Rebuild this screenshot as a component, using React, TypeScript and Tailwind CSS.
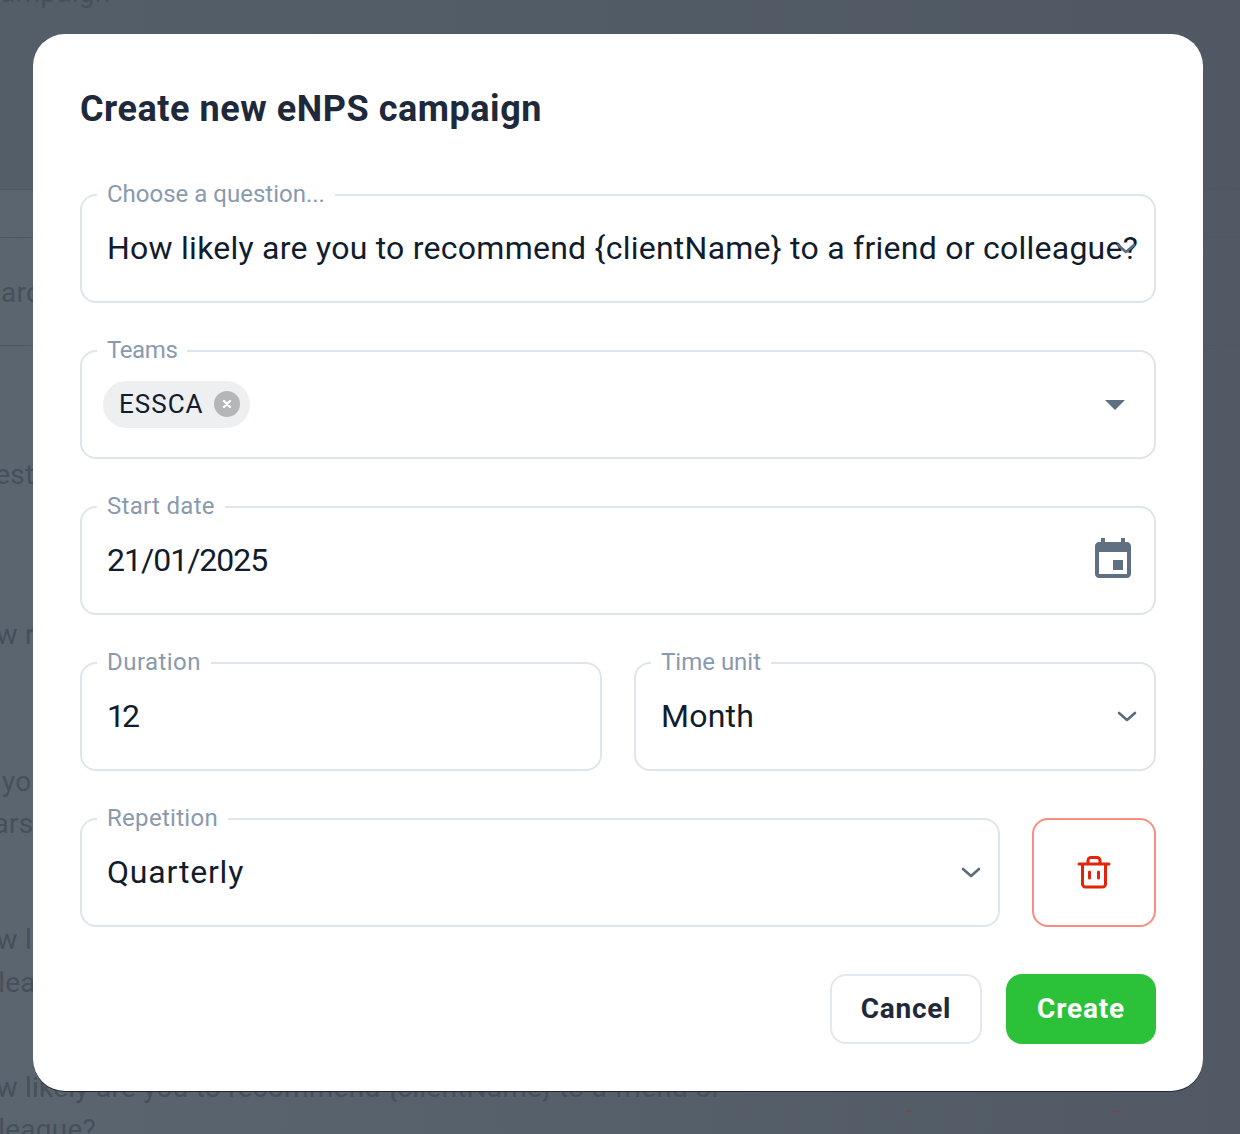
import React from "react";

const font = { fontFamily: 'Roboto, sans-serif' };

function Field({ label, children, className = "", labelClass = "tracking-[0.3px]" }: { label: string; children: React.ReactNode; className?: string; labelClass?: string }) {
  return (
    <fieldset className={`relative h-[122px] min-w-0 rounded-[16px] border-2 border-[#dfe5ec] ${className}`}>
      <legend className={`ml-[15px] px-[10px] text-[24px] leading-[28px] text-[#8a9aae] ${labelClass}`}>
        <span className="relative -top-[1px]">{label}</span>
      </legend>
      <div className="flex h-[78px] items-center pl-[25px] pr-[16px] text-[32px] leading-[40px] tracking-[0.25px] text-[#111c2d]">{children}</div>
    </fieldset>
  );
}

function Chevron() {
  return (
    <svg width="20" height="12" viewBox="0 0 20 12" fill="none" stroke="#5b6b7f" strokeWidth="2.6" strokeLinecap="round" strokeLinejoin="round" className="mt-[2px] block shrink-0">
      <path d="M2 2l8 7 8-7" />
    </svg>
  );
}

export default function App() {
  return (
    <div style={font} className="relative h-[1134px] w-[1240px] overflow-hidden bg-gradient-to-r from-[#5b6570] to-[#505964] text-[28px] leading-[42px] tracking-[0.25px] text-[#464f5a]">
      <div className="-mt-[28px] flex h-[218px] flex-col border-b border-[#4e5762] bg-gradient-to-r from-[#545e69] to-[#4f5863]">
        <span className="-ml-[15px]">campaign</span>
      </div>
      <div className="h-[48px] border-b border-[#4e5762]" />
      <div className="flex h-[108px] items-center border-b border-[#4e5762]">
        <span className="-ml-[31px] pt-[2px]">Search</span>
      </div>
      <div className="mt-[108px] -ml-[40px] flex flex-col">
        <span>Question</span>
        <span className="mt-[118px]">How r</span>
        <span className="mt-[105px]">Do you</span>
        <span className="ml-[5px]">years</span>
        <span className="mt-[74px]">How l</span>
        <span className="mt-[1px]">colleague</span>
        <span className="mt-[63px] whitespace-nowrap">How likely are you to recommend {"{clientName}"} to a friend or</span>
        <span>colleague?</span>
      </div>

      <div className="absolute inset-0 flex items-start justify-center pr-[4px] pt-[34px]">
        <div className="flex h-[1057px] w-[1170px] flex-col rounded-[32px] bg-white px-[47px] pt-[48px] shadow-[0_1px_0_#1e293b]">
          <h1 className="h-[52px] pt-[1px] text-[36px] font-bold leading-[52px] tracking-[0.55px] text-[#1e293b]">Create new eNPS campaign</h1>
          <div className="mt-[47px] flex flex-col gap-[34px]">
            <Field label="Choose a question..." labelClass="tracking-[0px]">
              <span className="whitespace-nowrap">How likely are you to recommend {"{clientName}"} to a friend or colleague?</span>
              <span className="absolute right-[18px] top-[32px]"><Chevron /></span>
            </Field>
            <Field label="Teams" labelClass="-tracking-[0.4px]">
              <div className="-ml-[4px] flex h-[47px] items-center rounded-full bg-[#edeff1] pl-[16px] pr-[10px] text-[26px] tracking-[1px] text-[#111c2d]">
                ESSCA
                <span className="ml-[10px] flex h-[26px] w-[26px] items-center justify-center rounded-full bg-[#b4b6b8]">
                  <svg width="10" height="10" viewBox="0 0 10 10" stroke="#fff" strokeWidth="2.4" strokeLinecap="round"><path d="M2 2l6 6M8 2l-6 6" /></svg>
                </span>
              </div>
              <svg width="48" height="48" viewBox="0 0 24 24" fill="#5f7083" className="ml-auto -mr-[1px]"><path d="M7 10l5 5 5-5z" /></svg>
            </Field>
            <Field label="Start date">
              <span className="-tracking-[1px]">21/01/2025</span>
              <svg width="48" height="48" viewBox="0 0 24 24" fill="#5f7083" className="ml-auto mr-[1px]"><path d="M17 12h-5v5h5v-5zM16 1v2H8V1H6v2H5c-1.11 0-1.99.9-1.99 2L3 19c0 1.1.89 2 2 2h14c1.1 0 2-.9 2-2V5c0-1.1-.9-2-2-2h-1V1h-2zm3 18H5V8h14v11z" /></svg>
            </Field>
            <div className="flex gap-[32px]">
              <Field label="Duration" className="flex-1" labelClass="tracking-[0.45px]"><span className="-tracking-[3px]">12</span></Field>
              <Field label="Time unit" className="flex-1" labelClass="tracking-[0px]">
                <span>Month</span>
                <span className="ml-auto mr-[1px]"><Chevron /></span>
              </Field>
            </div>
            <div className="flex gap-[32px]">
              <Field label="Repetition" className="flex-1">
                <span className="tracking-[0.8px]">Quarterly</span>
                <span className="ml-auto mr-[1px]"><Chevron /></span>
              </Field>
              <div className="flex h-[122px] items-end">
                <button className="flex h-[109px] w-[124px] items-center justify-center rounded-[16px] border-2 border-[#fb8d80]">
                  <svg width="34" height="34" viewBox="0 0 34 34" fill="none" stroke="#e3240c" strokeWidth="3" strokeLinecap="round" strokeLinejoin="round" className="-mt-[2px]">
                    <path d="M2 9h30M5.500 9v20a3 3 0 0 0 3 3h17a3 3 0 0 0 3-3V9M11 9V5.500a3 3 0 0 1 3-3h6a3 3 0 0 1 3 3V9M12.500 17v6M21.500 17v6" />
                  </svg>
                </button>
              </div>
            </div>
          </div>
          <div className="mt-[47px] flex justify-end gap-[24px] text-[28px] font-bold leading-[36px]">
            <button className="h-[70px] w-[152px] rounded-[16px] border-2 border-[#e2e8f0] tracking-[0.7px] text-[#1e293b]">Cancel</button>
            <button className="h-[70px] w-[150px] rounded-[16px] bg-[#2bc23a] tracking-[0.8px] text-white">Create</button>
          </div>
        </div>
      </div>
      <span className="absolute left-[905px] top-[1110px] h-[2px] w-[7px] bg-[#6e4a52]" />
      <span className="absolute left-[1112px] top-[1110px] h-[2px] w-[7px] bg-[#6e4a52]" />
    </div>
  );
}
